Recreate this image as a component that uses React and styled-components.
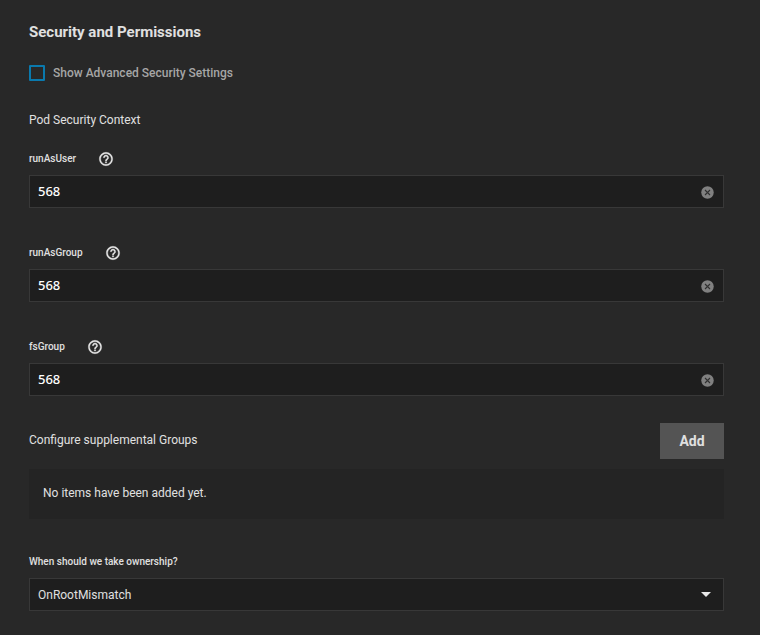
import React, { useState } from "react";
import styled, { createGlobalStyle } from "styled-components";

const GlobalStyle = createGlobalStyle`
  *, *::before, *::after { box-sizing: border-box; }
  body {
    margin: 0;
    background: #282828;
    color: #e0e0e0;
    font-family: Roboto, "Liberation Sans", sans-serif;
    font-size: 12px;
    line-height: 16px;
  }
  button, input, select { font: inherit; color: inherit; }
`;

const Section = styled.form`
  padding: 22px 36px 24px 29px;
`;

const Title = styled.h2`
  margin: 0 0 22px;
  font-size: 15px;
  font-weight: 700;
  line-height: 20px;
`;

const CheckLabel = styled.label`
  display: flex;
  align-items: center;
  gap: 8px;
  height: 18px;
  margin-bottom: 30px;
  color: #a6a6a6;
  font-weight: 500;
`;

const Checkbox = styled.input`
  appearance: none;
  width: 16px;
  height: 16px;
  margin: 0;
  border: 2px solid #0a79ad;
  border-radius: 1px;
  &:checked { background: #0a79ad; }
`;

const Subtitle = styled.h3`
  margin: 0;
  font-size: 12px;
  font-weight: 400;
`;

const Field = styled.div`
  margin-top: ${(p) => p.$gap || 37}px;
`;

const LabelRow = styled.div`
  display: flex;
  align-items: center;
  gap: 22px;
  height: 16px;
  margin-bottom: 8px;
`;

const FieldLabel = styled.label`
  font-size: 10px;
  font-weight: 500;
`;

const IconButton = styled.button`
  display: flex;
  flex: none;
  padding: 0;
  border: 0;
  background: none;
  color: #e8e8e8;
`;

const ClearButton = styled(IconButton)`
  padding-top: 2px;
  color: #808080;
`;

const Control = styled.div`
  display: flex;
  align-items: center;
  height: 33px;
  padding: 0 8px;
  border: 1px solid #383838;
  background: #1e1e1e;
`;

const TextInput = styled.input`
  flex: 1;
  min-width: 0;
  padding: 0 0 2px;
  border: 0;
  outline: 0;
  background: none;
  color: #fff;
  font-family: "Noto Sans", sans-serif;
  font-size: 13px;
  font-weight: 500;
`;

const Select = styled.select`
  flex: 1;
  min-width: 0;
  appearance: none;
  padding: 0;
  border: 0;
  outline: 0;
  background: none;
  option { background: #1e1e1e; }
`;

const Arrow = styled.svg`
  flex: none;
  margin-right: 3px;
  pointer-events: none;
`;

const GroupHeader = styled.div`
  display: flex;
  justify-content: space-between;
  align-items: center;
  margin-top: 27px;
`;

const GroupTitle = styled(Subtitle)`
  padding-bottom: 2px;
`;

const AddButton = styled.button`
  width: 64px;
  height: 36px;
  padding: 0;
  border: 0;
  background: #545454;
  font-size: 14px;
  font-weight: 700;
`;

const EmptyList = styled.div`
  margin: 10px 0 0;
  padding: 16px 14px 18px;
  background: #242424;
`;

const HelpIcon = () => (
  <svg width="16" height="16" viewBox="0 0 24 24" fill="currentColor" stroke="currentColor" strokeWidth="0.5" aria-hidden="true">
    <path d="M11 18h2v-2h-2v2zm1-16C6.48 2 2 6.48 2 12s4.48 10 10 10 10-4.48 10-10S17.520 2 12 2zm0 18c-4.410 0-8-3.590-8-8s3.590-8 8-8 8 3.590 8 8-3.590 8-8 8zm0-14c-2.210 0-4 1.790-4 4h2c0-1.100.9-2 2-2s2 .9 2 2c0 2-3 1.750-3 5h2c0-2.250 3-2.500 3-5 0-2.210-1.790-4-4-4z" />
  </svg>
);

const ClearIcon = () => (
  <svg width="15" height="15" viewBox="0 0 24 24" aria-hidden="true">
    <circle cx="12" cy="12" r="10" fill="currentColor" />
    <path d="M8 8l8 8M16 8l-8 8" stroke="#303030" strokeWidth="1.8" />
  </svg>
);

function NumberField({ name, gap }) {
  const [value, setValue] = useState("568");
  return (
    <Field $gap={gap}>
      <LabelRow>
        <FieldLabel htmlFor={name}>{name}</FieldLabel>
        <IconButton type="button" aria-label={`Help for ${name}`}>
          <HelpIcon />
        </IconButton>
      </LabelRow>
      <Control>
        <TextInput id={name} value={value} onChange={(e) => setValue(e.target.value)} />
        <ClearButton type="button" aria-label={`Clear ${name}`} onClick={() => setValue("")}>
          <ClearIcon />
        </ClearButton>
      </Control>
    </Field>
  );
}

export default function App() {
  return (
    <>
      <GlobalStyle />
      <Section>
        <Title>Security and Permissions</Title>
        <CheckLabel>
          <Checkbox type="checkbox" />
          Show Advanced Security Settings
        </CheckLabel>
        <Subtitle>Pod Security Context</Subtitle>
        <NumberField name="runAsUser" gap={23} />
        <NumberField name="runAsGroup" />
        <NumberField name="fsGroup" />
        <GroupHeader>
          <GroupTitle>Configure supplemental Groups</GroupTitle>
          <AddButton type="button">Add</AddButton>
        </GroupHeader>
        <EmptyList>No items have been added yet.</EmptyList>
        <Field $gap={35}>
          <LabelRow>
            <FieldLabel htmlFor="ownership">When should we take ownership?</FieldLabel>
          </LabelRow>
          <Control>
            <Select id="ownership" defaultValue="OnRootMismatch">
              <option>OnRootMismatch</option>
              <option>Always</option>
            </Select>
            <Arrow width="12" height="6" viewBox="0 0 12 6" aria-hidden="true">
              <path d="M1 0h10L6 5z" fill="#e8e8e8" />
            </Arrow>
          </Control>
        </Field>
      </Section>
    </>
  );
}
